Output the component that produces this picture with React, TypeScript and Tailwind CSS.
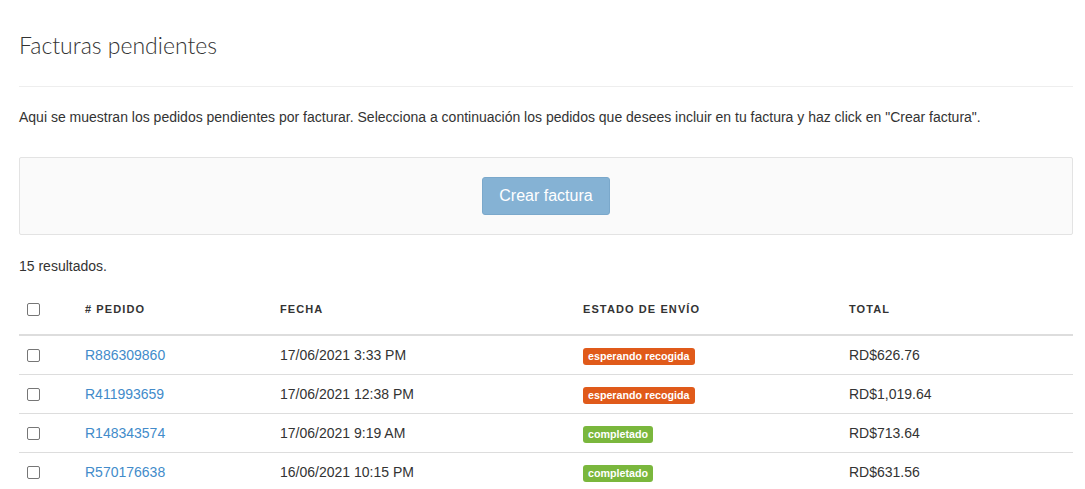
import React from "react";

type Row = { id: string; date: string; status: "pending" | "done"; total: string };

const rows: Row[] = [
  { id: "R886309860", date: "17/06/2021 3:33 PM", status: "pending", total: "RD$626.76" },
  { id: "R411993659", date: "17/06/2021 12:38 PM", status: "pending", total: "RD$1,019.64" },
  { id: "R148343574", date: "17/06/2021 9:19 AM", status: "done", total: "RD$713.64" },
  { id: "R570176638", date: "16/06/2021 10:15 PM", status: "done", total: "RD$631.56" },
];

function Box() {
  return (
    <input
      type="checkbox"
      className="appearance-none block w-[13px] h-[13px] border border-[#767676] rounded-[2px] bg-white m-0"
    />
  );
}

export default function App() {
  return (
    <div
      className="bg-white text-[#333] px-[19px] w-[1092px] h-[489px] overflow-hidden"
      style={{ fontFamily: '"Liberation Sans", Arial, sans-serif' }}
    >
      <h1
        className="pt-[29px] text-[23px] leading-[32px] font-light text-[#333] mb-[25px]"
        style={{ fontFamily: 'Lato, sans-serif' }}
      >
        Facturas pendientes
      </h1>
      <div className="w-[1054px]">
        <hr className="border-0 border-t border-[#eee] m-0" />
        <p className="mt-[20px] text-[14px] leading-[20px]">
          Aqui se muestran los pedidos pendientes por facturar. Selecciona a continuación los pedidos que desees incluir en tu factura y haz click en "Crear factura".
        </p>
        <div className="mt-[30px] bg-[#fafafa] border border-[#e3e3e3] rounded-[2px] p-[19px] flex justify-center">
          <button className="w-[128px] h-[38px] bg-[#85b2d4] border border-[#7aa8cb] rounded-[3px] text-white text-[16px]">
            Crear factura
          </button>
        </div>
        <div className="mt-[21px] text-[14px] leading-[20px]">15 resultados.</div>
        <table className="mt-[9px] w-full border-collapse text-[14px]">
          <colgroup>
            <col className="w-[58px]" />
            <col className="w-[195px]" />
            <col className="w-[303px]" />
            <col className="w-[266px]" />
            <col />
          </colgroup>
          <thead>
            <tr className="border-b-2 border-[#ddd]">
              <th className="px-[8px] pt-[14px] pb-[15px] text-left align-middle"><Box /></th>
              {["# PEDIDO", "FECHA", "ESTADO DE ENVÍO", "TOTAL"].map((h) => (
                <th key={h} className="px-[8px] pt-[14px] pb-[15px] text-left text-[11px] leading-[20px] font-bold tracking-[1.1px] text-[#333]">
                  {h}
                </th>
              ))}
            </tr>
          </thead>
          <tbody>
            {rows.map((r) => (
              <tr key={r.id} className="border-b border-[#ddd]">
                <td className="px-[8px] py-[9px] leading-[20px] align-middle"><Box /></td>
                <td className="px-[8px] py-[9px] leading-[20px]">
                  <a className="text-[#428bca]" href="#">{r.id}</a>
                </td>
                <td className="px-[8px] py-[9px] leading-[20px]">{r.date}</td>
                <td className="px-[8px] py-[9px] leading-[20px]">
                  <span
                    className={
                      "inline-block text-white text-[10.7px] font-bold leading-[17px] px-[5px] rounded-[3px] align-middle " +
                      (r.status === "pending" ? "bg-[#e05a1a]" : "bg-[#7ab73d]")
                    }
                  >
                    {r.status === "pending" ? "esperando recogida" : "completado"}
                  </span>
                </td>
                <td className="px-[8px] py-[9px] leading-[20px]">{r.total}</td>
              </tr>
            ))}
          </tbody>
        </table>
      </div>
    </div>
  );
}
